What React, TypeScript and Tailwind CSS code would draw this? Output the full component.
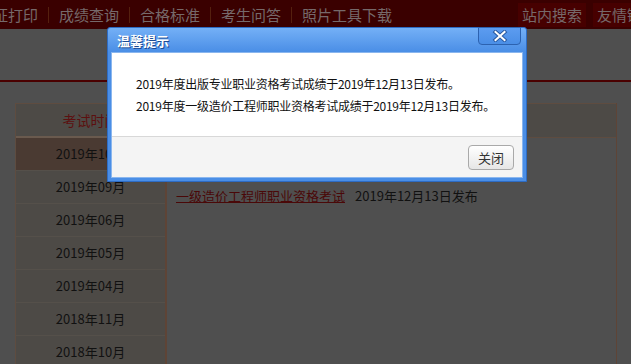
import React from "react";

const NAV_ITEMS = ["证打印", "成绩查询", "合格标准", "考生问答", "照片工具下载"];

const MONTHS = [
  "2019年10月",
  "2019年09月",
  "2019年06月",
  "2019年05月",
  "2019年04月",
  "2018年11月",
  "2018年10月",
];

function CloseX() {
  return (
    <svg width="16" height="12" viewBox="0 0 16 12" aria-hidden="true">
      <path d="M3.5 2 L12.5 10 M12.5 2 L3.5 10" stroke="#2a5aa0" strokeWidth="4" strokeLinecap="square" />
      <path d="M3.5 2 L12.5 10 M12.5 2 L3.5 10" stroke="#ffffff" strokeWidth="2" strokeLinecap="square" />
    </svg>
  );
}

export default function App() {
  return (
    <div className="relative w-[631px] h-[364px] overflow-hidden bg-[#4f4f4f] font-['Noto_Sans_CJK_SC',sans-serif]">
      {/* ========== NAV ========== */}
      <nav className="h-[29px] bg-[#3a0000] flex items-center text-[15px] text-[#76696a]">
        <div className="flex items-center -ml-[7px]">
          {NAV_ITEMS.map((item, i) => (
            <React.Fragment key={item}>
              {i > 0 && <span className="mx-[10px] w-px h-[16px] bg-[#55200f]" />}
              <span className="whitespace-nowrap leading-none">{item}</span>
            </React.Fragment>
          ))}
        </div>
        <div className="ml-auto flex items-center gap-[7px] -mr-[30px]">
          <span className="h-[24px] px-[4px] flex items-center bg-[#470000] leading-none whitespace-nowrap">站内搜索</span>
          <span className="h-[24px] px-[4px] flex items-center bg-[#470000] leading-none whitespace-nowrap">友情链接</span>
        </div>
      </nav>

      <div className="mt-[51px] h-[2px] bg-[#4a0000]" />

      {/* ========== CONTENU ========== */}
      <div className="ml-[15px] mt-[21px] w-[602px] flex">
        <aside className="w-[150px] border-l border-[#5e4c40] bg-[#4d4a46]">
          <div className="h-[35px] border-t border-[#5e4c40] border-b-2 border-b-[#6a5a4e] flex items-center justify-center text-[14px] text-[#5c1010]">
            考试时间
          </div>
          {MONTHS.map((m, i) => (
            <div
              key={m}
              className={`h-[33px] border-b border-[#55504a] flex items-center justify-center text-[13px] text-[#111] ${
                i === 0 ? "bg-[#4a3a32]" : ""
              }`}
            >
              {m}
            </div>
          ))}
        </aside>

        <main className="flex-1 border-l-2 border-r border-[#5e4436] h-[300px]">
          <div className="h-[35px] border-t border-b border-[#5e4c40] bg-[#4d4a46]" />
          <div className="pl-[9px] pt-[48px] text-[13px] leading-[20px] flex gap-[10px]">
            <span className="text-[#4a0808] underline">一级造价工程师职业资格考试</span>
            <span className="text-[#111]">2019年12月13日发布</span>
          </div>
        </main>
      </div>

      {/* ========== MODALE ========== */}
      <div className="absolute left-[107px] top-[27px] w-[420px] h-[155px] flex flex-col border border-[#2e6cc4] rounded-t-[3px] bg-[#4a8ee6]">
        <div className="h-[24px] shrink-0 flex items-center pl-[9px] bg-gradient-to-b from-[#74b0f6] to-[#4a8ee6] rounded-t-[3px]">
          <span className="text-white font-bold text-[13px] leading-none [text-shadow:1px_1px_0_#1c4a92]">温馨提示</span>
        </div>
        <div className="absolute right-[5px] top-[-1px] w-[43px] h-[18px] border border-[#2c62b0] rounded-b-[4px] bg-gradient-to-b from-[#5c9cf0] to-[#4a8ee6] flex items-center justify-center">
          <CloseX />
        </div>
        <div className="flex-1 mx-[3px] mb-[3px] flex flex-col border border-[#8ab6ee]">
          <div className="h-[83px] bg-white pl-[24px] pt-[20px] text-[12px] leading-[22px] tracking-[-0.25px] text-[#111]">
            <p>2019年度出版专业职业资格考试成绩于2019年12月13日发布。</p>
            <p>2019年度一级造价工程师职业资格考试成绩于2019年12月13日发布。</p>
          </div>
          <div className="flex-1 bg-[#f4f4f4] border-t border-[#d8d8d8] flex justify-end items-start pt-[8px] pr-[8px]">
            <button className="w-[46px] h-[25px] rounded-[4px] border border-[#a9a9a9] bg-gradient-to-b from-white to-[#e6e6e6] text-[13px] text-[#333] leading-none">
              关闭
            </button>
          </div>
        </div>
      </div>
    </div>
  );
}
